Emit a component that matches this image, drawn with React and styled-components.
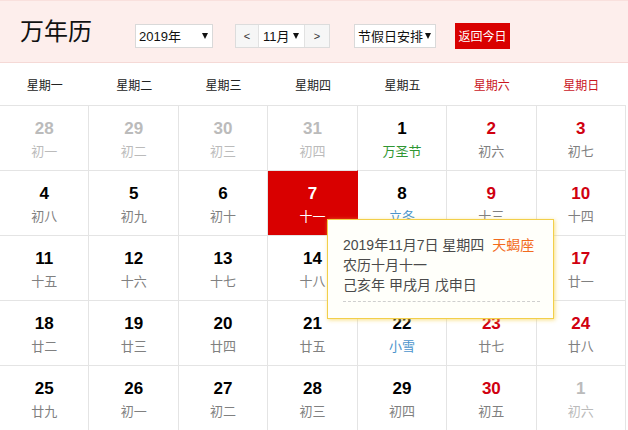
import React from 'react';
import styled, { createGlobalStyle } from 'styled-components';

const Global = createGlobalStyle`
  html, body { margin: 0; padding: 0; background: #fff; }
  body { font-family: "Liberation Sans", "Noto Sans CJK SC", sans-serif; }
  * { box-sizing: border-box; }
`;

const Page = styled.div`
  width: 628px;
  height: 430px;
  overflow: hidden;
  position: relative;
`;

const Header = styled.header`
  height: 63px;
  background: #fdeeec;
  border-top: 1px solid #f9e0dd;
  border-bottom: 1px solid #f5d9d6;
  display: flex;
  align-items: center;
  padding: 8px 0 0 20px;
`;

const Title = styled.h1`
  margin: -8px 0 0 0;
  width: 115px;
  font-size: 24px;
  font-weight: normal;
  line-height: 1;
  color: #111;
`;

const SelectBox = styled.div`
  width: ${(p) => p.$w}px;
  height: 24px;
  margin-left: ${(p) => p.$ml || 0}px;
  background: #fff;
  border: 1px solid #d9d9d9;
  display: flex;
  align-items: center;
  justify-content: space-between;
  padding: 0 4px 0 3px;
  font-size: 13px;
  color: #111;
  white-space: nowrap;
`;

const Caret = styled.span`
  flex: none;
  width: 0;
  height: 0;
  border-left: 3.5px solid transparent;
  border-right: 3.5px solid transparent;
  border-top: 6px solid #111;
`;

const MonthGroup = styled.div`
  display: flex;
  height: 24px;
  margin-left: 22px;
  border: 1px solid #dcdcdc;
`;

const NavBtn = styled.div`
  width: ${(p) => p.$w}px;
  background: #f6f6f6;
  display: flex;
  align-items: center;
  justify-content: center;
  font-size: 11px;
  color: #333;
`;

const MonthSelect = styled.div`
  width: 47px;
  background: #fff;
  border-left: 1px solid #e2e2e2;
  border-right: 1px solid #e2e2e2;
  display: flex;
  align-items: center;
  justify-content: space-between;
  padding: 0 5px 0 4px;
  font-size: 13px;
  color: #111;
`;

const TodayBtn = styled.div`
  margin-left: 19px;
  width: 55px;
  height: 26px;
  background: #d90000;
  color: #fff;
  font-size: 12px;
  display: flex;
  align-items: center;
  justify-content: center;
`;

const WeekRow = styled.div`
  width: 626px;
  height: 42px;
  display: grid;
  grid-template-columns: repeat(7, 1fr);
  align-items: center;
`;

const WeekName = styled.div`
  text-align: center;
  font-size: 12px;
  color: ${(p) => (p.$weekend ? '#c9151e' : '#222')};
`;

const Body = styled.div`
  position: relative;
`;

const Grid = styled.div`
  width: 626px;
  display: grid;
  grid-template-columns: repeat(7, 1fr);
  grid-auto-rows: 65px;
`;

const Cell = styled.div`
  border-top: 1px solid #e4e4e4;
  border-right: 1px solid ${(p) => (p.$selected ? '#d90000' : '#e4e4e4')};
  background: ${(p) => (p.$selected ? '#d90000' : '#fff')};
  padding-top: 13px;
  text-align: center;
`;

const DayNum = styled.div`
  font-size: 17px;
  font-weight: bold;
  line-height: 20px;
  font-family: "Liberation Sans", Arial, sans-serif;
  color: ${(p) => p.$color};
`;

const Lunar = styled.div`
  margin-top: 2px;
  font-size: 13px;
  line-height: 20px;
  font-family: "Noto Sans CJK SC", sans-serif;
  color: ${(p) => p.$color};
`;

const Tip = styled.div`
  position: absolute;
  z-index: 2;
  left: 327px;
  top: 114px;
  width: 227px;
  height: 100px;
  background: #fffffa;
  border: 1px solid #f2cf4a;
  box-shadow: 1px 1px 4px rgba(245, 210, 80, 0.7);
  padding: 15px 13px 0 15px;
  font-size: 14px;
  line-height: 20px;
  color: #4a4a4a;
`;

const TipLine = styled.div`
  white-space: nowrap;
`;

const Star = styled.span`
  color: #f26b1d;
  margin-left: 8px;
`;

const Dash = styled.div`
  margin-top: 6px;
  border-top: 1px dashed #cfcfcf;
`;

const weekNames = ['星期一', '星期二', '星期三', '星期四', '星期五', '星期六', '星期日'];

const days = [
  { d: 28, l: '初一', o: true }, { d: 29, l: '初二', o: true }, { d: 30, l: '初三', o: true },
  { d: 31, l: '初四', o: true }, { d: 1, l: '万圣节', t: 'holiday' }, { d: 2, l: '初六' }, { d: 3, l: '初七' },
  { d: 4, l: '初八' }, { d: 5, l: '初九' }, { d: 6, l: '初十' }, { d: 7, l: '十一', sel: true },
  { d: 8, l: '立冬', t: 'term' }, { d: 9, l: '十三' }, { d: 10, l: '十四' },
  { d: 11, l: '十五' }, { d: 12, l: '十六' }, { d: 13, l: '十七' }, { d: 14, l: '十八' },
  { d: 15, l: '十九' }, { d: 16, l: '二十' }, { d: 17, l: '廿一' },
  { d: 18, l: '廿二' }, { d: 19, l: '廿三' }, { d: 20, l: '廿四' }, { d: 21, l: '廿五' },
  { d: 22, l: '小雪', t: 'term' }, { d: 23, l: '廿七' }, { d: 24, l: '廿八' },
  { d: 25, l: '廿九' }, { d: 26, l: '初一' }, { d: 27, l: '初二' }, { d: 28, l: '初三' },
  { d: 29, l: '初四' }, { d: 30, l: '初五' }, { d: 1, l: '初六', o: true },
];

function numColor(day, i) {
  if (day.sel) return '#fff';
  if (day.o) return '#bbb';
  if (i % 7 >= 5) return '#d0000f';
  return '#000';
}

function lunarColor(day) {
  if (day.sel) return '#fff';
  if (day.o) return '#bbb';
  if (day.t === 'holiday') return '#2f9632';
  if (day.t === 'term') return '#4a94cc';
  return '#808080';
}

export default function App() {
  return (
    <Page>
      <Global />
      <Header>
        <Title>万年历</Title>
        <SelectBox $w={78}>
          <span>2019年</span>
          <Caret />
        </SelectBox>
        <MonthGroup>
          <NavBtn $w={22}>&lt;</NavBtn>
          <MonthSelect>
            <span>11月</span>
            <Caret />
          </MonthSelect>
          <NavBtn $w={24}>&gt;</NavBtn>
        </MonthGroup>
        <SelectBox $w={82} $ml={24}>
          <span>节假日安排</span>
          <Caret />
        </SelectBox>
        <TodayBtn>返回今日</TodayBtn>
      </Header>
      <WeekRow>
        {weekNames.map((w, i) => (
          <WeekName key={w} $weekend={i >= 5}>{w}</WeekName>
        ))}
      </WeekRow>
      <Body>
        <Grid>
          {days.map((day, i) => (
            <Cell key={i} $selected={day.sel}>
              <DayNum $color={numColor(day, i)}>{day.d}</DayNum>
              <Lunar $color={lunarColor(day)}>{day.l}</Lunar>
            </Cell>
          ))}
        </Grid>
        <Tip>
          <TipLine>
            2019年11月7日 星期四<Star>天蝎座</Star>
          </TipLine>
          <TipLine>农历十月十一</TipLine>
          <TipLine>己亥年 甲戌月 戊申日</TipLine>
          <Dash />
        </Tip>
      </Body>
    </Page>
  );
}
